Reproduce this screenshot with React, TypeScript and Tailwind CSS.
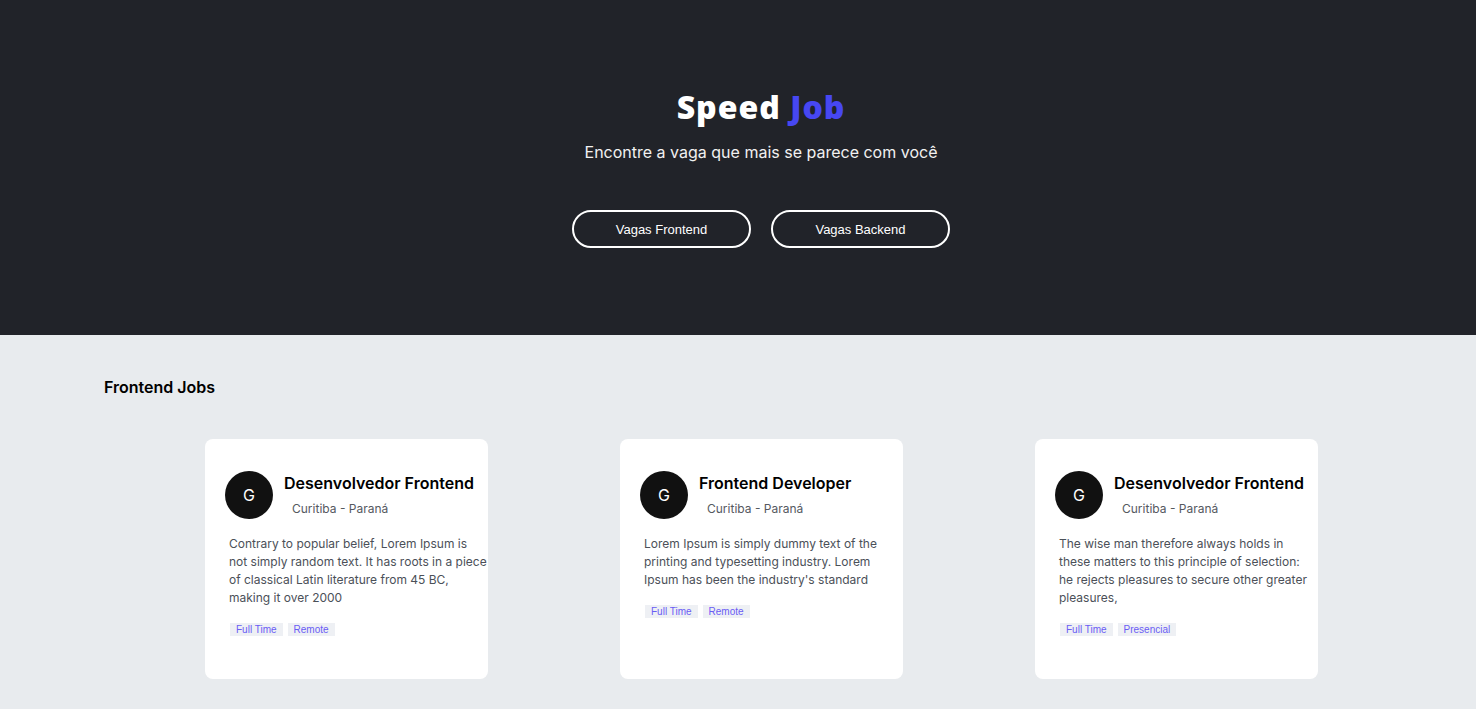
import React from "react";

type Job = {
  title: string;
  location: string;
  description: string;
  tags: string[];
};

const jobs: Job[] = [
  {
    title: "Desenvolvedor Frontend",
    location: "Curitiba - Paraná",
    description:
      "Contrary to popular belief, Lorem Ipsum is not simply random text. It has roots in a piece of classical Latin literature from 45 BC, making it over 2000",
    tags: ["Full Time", "Remote"],
  },
  {
    title: "Frontend Developer",
    location: "Curitiba - Paraná",
    description:
      "Lorem Ipsum is simply dummy text of the printing and typesetting industry. Lorem Ipsum has been the industry's standard",
    tags: ["Full Time", "Remote"],
  },
  {
    title: "Desenvolvedor Frontend",
    location: "Curitiba - Paraná",
    description:
      "The wise man therefore always holds in these matters to this principle of selection: he rejects pleasures to secure other greater pleasures,",
    tags: ["Full Time", "Presencial"],
  },
];

function JobCard({ job }: { job: Job }) {
  return (
    <div className="flex h-[240px] w-[283px] flex-col rounded-lg bg-white pl-5 pt-8">
      <div className="flex items-start gap-[11px]">
        <div className="grid size-12 shrink-0 place-items-center rounded-full bg-[#111111] text-base text-white">
          G
        </div>
        <div className="flex flex-col">
          <h3 className="mt-[1px] text-base leading-[22px] font-semibold text-black">{job.title}</h3>
          <span className="mt-[7px] pl-2 text-xs leading-4 text-[#55595f]">{job.location}</span>
        </div>
      </div>
      <p className="mt-4 ml-1 w-[258px] text-xs leading-[18px] text-[#4b5058]">{job.description}</p>
      <div className="mt-4 ml-[5px] flex gap-[5px] font-['Liberation_Sans',Arial,sans-serif]">
        {job.tags.map((tag) => (
          <span key={tag} className="bg-[#eef0f4] px-1.5 text-[10px] leading-[13px] text-[#6a5cf5]">
            {tag}
          </span>
        ))}
      </div>
    </div>
  );
}

export default function App() {
  return (
    <div className="min-h-[709px] bg-[#e8ebee] font-['Inter','Noto_Sans',sans-serif]">
      <header className="flex h-[335px] flex-col items-center bg-[#212329] pt-[86px] pl-[46px]">
        <h1 className="font-['Open_Sans',sans-serif] text-[32px] leading-[42px] font-extrabold tracking-[1px] text-white">
          Speed <span className="text-[#4747f2]">Job</span>
        </h1>
        <p className="mt-[14px] text-base leading-5 text-[#f1f1f1]">Encontre a vaga que mais se parece com você</p>
        <div className="mt-[48px] flex gap-5 font-['Liberation_Sans',Arial,sans-serif]">
          <button type="button" className="h-[38px] w-[179px] rounded-full border-2 border-white pt-[1px] text-[13px] text-white">
            Vagas Frontend
          </button>
          <button type="button" className="h-[38px] w-[179px] rounded-full border-2 border-white pt-[1px] text-[13px] text-white">
            Vagas Backend
          </button>
        </div>
      </header>
      <section className="px-[104px] pt-[42px] pb-[30px]">
        <h2 className="text-base leading-5 font-semibold text-black">Frontend Jobs</h2>
        <div className="mt-[42px] flex gap-[132px] pl-[101px]">
          {jobs.map((job, i) => (
            <JobCard key={i} job={job} />
          ))}
        </div>
      </section>
    </div>
  );
}
